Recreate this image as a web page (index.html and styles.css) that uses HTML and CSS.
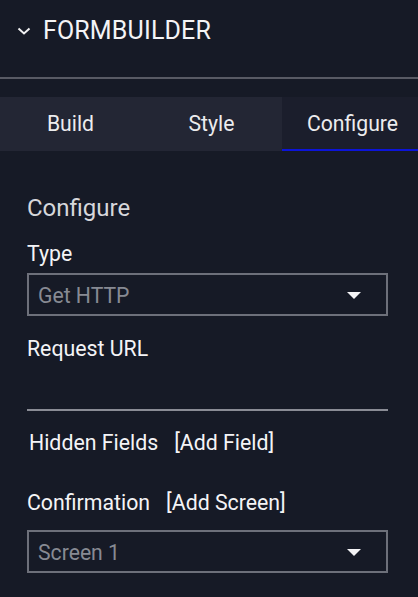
FILE: index.html
```html
<!DOCTYPE html>
<html>
<head>
<meta charset="utf-8">
<link rel="stylesheet" href="styles.css">
</head>
<body>
<div class="panel">
  <div class="header">
    <svg class="chev" width="14" height="8" viewBox="0 0 14 8"><path d="M1.5 1.5 L7 6.5 L12.5 1.5" fill="none" stroke="#f0f0f2" stroke-width="2"/></svg>
    <span class="title">FORMBUILDER</span>
  </div>
  <div class="tabs">
    <div class="tab">Build</div>
    <div class="tab">Style</div>
    <div class="tab active">Configure</div>
  </div>
  <div class="content">
    <div class="heading">Configure</div>
    <div class="label">Type</div>
    <div class="select">
      <span class="value">Get HTTP</span>
      <span class="caret"></span>
    </div>
    <div class="label url-label">Request URL</div>
    <div class="url-input"></div>
    <div class="row hidden-row"><span>Hidden Fields</span><span>[Add Field]</span></div>
    <div class="row confirm-row"><span>Confirmation</span><span>[Add Screen]</span></div>
    <div class="select select2">
      <span class="value">Screen 1</span>
      <span class="caret"></span>
    </div>
  </div>
</div>
</body>
</html>
```
FILE: styles.css
```css
html, body {
  margin: 0;
  padding: 0;
  background: #161a26;
}
body {
  font-family: Roboto, "Noto Sans", sans-serif;
  color: #f2f2f4;
  width: 418px;
  height: 597px;
  overflow: hidden;
}
.header {
  display: flex;
  align-items: center;
  height: 79px;
  box-sizing: border-box;
  padding: 16px 0 31px 17px;
  border-bottom: 2px solid #585a64;
}
.chev {
  display: block;
  margin-right: 12px;
}
.title {
  font-size: 25px;
  line-height: 30px;
  letter-spacing: 0.15px;
  color: #f4f4f6;
}
.tabs {
  margin-top: 18px;
  display: grid;
  grid-template-columns: 141px 141px 141px;
  height: 54px;
  overflow: hidden;
  background: #232634;
}
.tab {
  display: flex;
  align-items: center;
  justify-content: center;
  font-size: 21.2px;
  color: #ececee;
  padding-bottom: 1px;
  box-sizing: border-box;
}
.tab.active {
  background: #1b1e2c;
  border-bottom: 2px solid #0c14d8;
  padding-bottom: 0;
}
.content {
  padding: 43px 30px 0 27px;
}
.heading {
  font-size: 24px;
  line-height: 28px;
  color: #d6d7db;
}
.label {
  font-size: 21.3px;
  line-height: 25px;
  margin-top: 19px;
  color: #f4f4f6;
}
.select {
  margin-top: 7px;
  height: 43px;
  box-sizing: border-box;
  border: 2px solid #6d707a;
  display: flex;
  align-items: center;
  justify-content: space-between;
  padding: 1px 25px 0 9px;
}
.value {
  font-size: 21.2px;
  line-height: 25px;
  color: #878a93;
}
.caret {
  width: 0;
  height: 0;
  border-left: 7px solid transparent;
  border-right: 7px solid transparent;
  border-top: 7px solid #f4f4f6;
}
.url-label {
  margin-top: 20px;
}
.url-input {
  height: 48px;
  border-bottom: 2px solid #8a8c95;
}
.row {
  display: flex;
  gap: 16px;
  font-size: 21.3px;
  line-height: 25px;
  color: #f4f4f6;
}
.hidden-row {
  margin-top: 19px;
  padding-left: 2px;
}
.confirm-row {
  margin-top: 35px;
}
.select2 {
  margin-top: 15px;
}
```
